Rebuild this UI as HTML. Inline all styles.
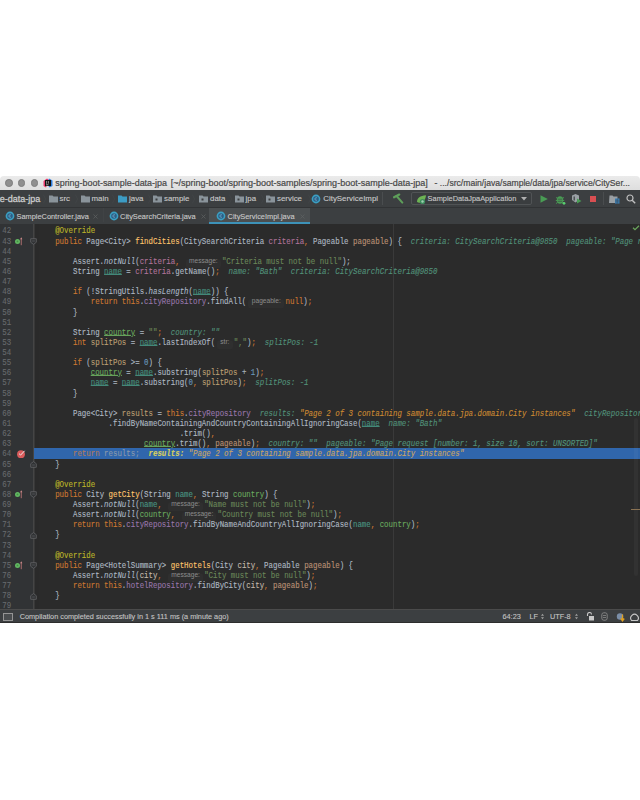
<!DOCTYPE html>
<html><head><meta charset="utf-8">
<style>
html,body{margin:0;padding:0;background:#fff;width:640px;height:800px;overflow:hidden;position:relative}
*{box-sizing:border-box}
.abs{position:absolute}
#title{position:absolute;left:0;top:176px;width:640px;height:14px;background:linear-gradient(#ebebeb,#dedede);border-radius:4px 4px 0 0}
#title .dot{position:absolute;top:3px;width:7.6px;height:7.6px;border-radius:50%;background:#8f8f8f;border:0.5px solid #7d7d7d}
#title .t{position:absolute;left:55.2px;top:1.6px;height:14px;line-height:14px;font:8.94px "Liberation Sans",sans-serif;color:#484848;white-space:pre;-webkit-text-stroke:0.2px #484848}
#nav{position:absolute;left:0;top:190px;width:640px;height:17px;background:#3c3f41;font:7.9px "Liberation Sans",sans-serif;color:#c8c8c8;-webkit-text-stroke:0.12px #c8c8c8}
#nav .ni{position:absolute;top:0.2px;height:17px;line-height:17px;white-space:pre}
#sep1{position:absolute;left:0;top:207px;width:640px;height:1px;background:#313335}
#tabs{position:absolute;left:0;top:208px;width:640px;height:16px;background:#3c3f41;font:7.6px "Liberation Sans",sans-serif;color:#c8c8c8;-webkit-text-stroke:0.12px #c8c8c8}
#tabs .tt{position:absolute;top:0.8px;height:16px;line-height:15px;white-space:pre}
#editor{position:absolute;left:0;top:224px;width:640px;height:385px;background:#2b2b2b;overflow:hidden}
#gut{position:absolute;left:0;top:224px;width:33.5px;height:385px;background:#313335}
#foldline{position:absolute;left:33px;top:224px;width:1px;height:385px;background:#454545;box-shadow:1px 0 0 #383838}
#margin{position:absolute;left:393px;top:224px;width:1px;height:385px;background:#3a3a3a}
.ln{position:absolute;left:37.4px;height:10.135px;line-height:10.135px;font:7.42px "Liberation Mono",monospace;white-space:pre;color:#a9b7c6;-webkit-text-stroke:0.1px currentColor;transform:scaleY(1.1);transform-origin:0 7.6px}
.num{position:absolute;left:0;width:11.2px;text-align:right;height:10.135px;line-height:10.135px;font:7.42px "Liberation Mono",monospace;color:#676a6d;-webkit-text-stroke:0.1px currentColor;transform:scaleY(1.1);transform-origin:0 7.6px}
.kw{color:#cc7832}.df{color:#afb9c3}.an{color:#bbb529}.st{color:#6a8759}.nu{color:#6897bb}.md{color:#ffc66d}.fl{color:#9876aa}.it{font-style:italic}
.pc{color:#b0739a}.pp{color:#bb9175}.vn{color:#458e7e;text-decoration:underline;text-underline-offset:0px}.vc{color:#6aaa5f;text-decoration:underline;text-underline-offset:0px}.vs{color:#bb9f72}.py{color:#c2b8aa}.vn2{color:#4a9683}.vc2{color:#6aaa5f}
.dv{color:#52927a;font-style:italic}.dc{color:#cc8a32;font-style:italic}
.hk{color:#b07a5a}.hd{color:#8a9aab}.hy{color:#d8d060;font-style:italic;font-weight:bold}.hv{color:#c9a565;font-style:italic}
.hint{display:inline-block;position:relative;height:10px;vertical-align:top}
.hint b{position:absolute;left:2px;right:1.2px;top:1.6px;bottom:0.2px;background:#2f2f2f;border-radius:2px;font:normal 6.6px "Liberation Sans",sans-serif;color:#8c8c8c;text-align:center;line-height:2.9px;-webkit-text-stroke:0}
#hl{position:absolute;left:34px;top:448.4px;width:606px;height:10.135px;background:#3066ac}
#status{position:absolute;left:0;top:609px;width:640px;height:14px;background:#3c3f41;border-top:1px solid #4b4b4b;border-bottom:1px solid #2d2d2d;font:7.3px "Liberation Sans",sans-serif;color:#c4c4c4;-webkit-text-stroke:0.1px #c4c4c4}
#status .s{position:absolute;top:0.7px;height:12px;line-height:12px;white-space:pre}
</style></head><body>
<div id="title">
  <div class="dot" style="left:5px"></div><div class="dot" style="left:17.75px"></div><div class="dot" style="left:30.5px"></div>
  <svg class="abs" style="left:42.5px;top:2px" width="10" height="10" viewBox="0 0 10 10"><path d="M0.5 3L4 0.5L6 2L3 9.5L0.5 8z" fill="#e8396b"/><path d="M6 0.5L9.5 2.5V8L6.5 9.5L4 6z" fill="#2f7fe0"/><rect x="2" y="2" width="6" height="6" fill="#111"/><path d="M3 6.8h2.5" stroke="#fff" stroke-width="0.6"/><path d="M3.6 3v2.8M5.4 3v2.6" stroke="#fff" stroke-width="0.5"/></svg>
  <div class="t" style="left:55.2px;font-size:8.95px">spring-boot-sample-data-jpa</div><div class="t" style="left:170.8px;font-size:9.01px">[~/spring-boot/spring-boot-samples/spring-boot-sample-data-jpa]</div><div class="t" style="left:434.6px;font-size:8.6px">- .../src/main/java/sample/data/jpa/service/CitySer...</div>
</div>
<div id="nav">
<div class="ni" style="right:599.8px;top:1px;text-align:right;color:#cbcbcb;font-size:9px;-webkit-text-stroke:0.3px #cbcbcb">e-data-jpa</div>
<svg class="abs" style="left:42.85px;top:4px" width="3" height="10" viewBox="0 0 3 10"><path d="M0.3 0.5L2.6 5L0.3 9.5" stroke="#45484a" stroke-width="0.6" fill="none"/></svg>
<svg class="abs" style="left:48.7px;top:4.8px" width="9" height="8" viewBox="0 0 9 8"><path d="M0 0.5h3.5l1 1H9V7.5H0z" fill="#8a949b"/></svg>
<div class="ni" style="left:59.5px">src</div>
<svg class="abs" style="left:74.85px;top:4px" width="3" height="10" viewBox="0 0 3 10"><path d="M0.3 0.5L2.6 5L0.3 9.5" stroke="#45484a" stroke-width="0.6" fill="none"/></svg>
<svg class="abs" style="left:80.7px;top:4.8px" width="9" height="8" viewBox="0 0 9 8"><path d="M0 0.5h3.5l1 1H9V7.5H0z" fill="#8a949b"/></svg>
<div class="ni" style="left:91.5px">main</div>
<svg class="abs" style="left:111.5px;top:4px" width="3" height="10" viewBox="0 0 3 10"><path d="M0.3 0.5L2.6 5L0.3 9.5" stroke="#45484a" stroke-width="0.6" fill="none"/></svg>
<svg class="abs" style="left:118px;top:4.8px" width="9" height="8" viewBox="0 0 9 8"><path d="M0 0.5h3.5l1 1H9V7.5H0z" fill="#3c9cc4"/></svg>
<div class="ni" style="left:129.0px">java</div>
<svg class="abs" style="left:147.75px;top:4px" width="3" height="10" viewBox="0 0 3 10"><path d="M0.3 0.5L2.6 5L0.3 9.5" stroke="#45484a" stroke-width="0.6" fill="none"/></svg>
<svg class="abs" style="left:153px;top:4.8px" width="9" height="8" viewBox="0 0 9 8"><path d="M0 0.5h3.5l1 1H9V7.5H0z" fill="#8a949b"/><rect x="2.5" y="3.5" width="2" height="2" fill="#3c3f41"/></svg>
<div class="ni" style="left:164.0px">sample</div>
<svg class="abs" style="left:192.125px;top:4px" width="3" height="10" viewBox="0 0 3 10"><path d="M0.3 0.5L2.6 5L0.3 9.5" stroke="#45484a" stroke-width="0.6" fill="none"/></svg>
<svg class="abs" style="left:198.75px;top:4.8px" width="9" height="8" viewBox="0 0 9 8"><path d="M0 0.5h3.5l1 1H9V7.5H0z" fill="#8a949b"/><rect x="2.5" y="3.5" width="2" height="2" fill="#3c3f41"/></svg>
<div class="ni" style="left:210.0px">data</div>
<svg class="abs" style="left:229.25px;top:4px" width="3" height="10" viewBox="0 0 3 10"><path d="M0.3 0.5L2.6 5L0.3 9.5" stroke="#45484a" stroke-width="0.6" fill="none"/></svg>
<svg class="abs" style="left:235px;top:4.8px" width="9" height="8" viewBox="0 0 9 8"><path d="M0 0.5h3.5l1 1H9V7.5H0z" fill="#8a949b"/><rect x="2.5" y="3.5" width="2" height="2" fill="#3c3f41"/></svg>
<div class="ni" style="left:245.5px">jpa</div>
<svg class="abs" style="left:260.5px;top:4px" width="3" height="10" viewBox="0 0 3 10"><path d="M0.3 0.5L2.6 5L0.3 9.5" stroke="#45484a" stroke-width="0.6" fill="none"/></svg>
<svg class="abs" style="left:266px;top:4.8px" width="9" height="8" viewBox="0 0 9 8"><path d="M0 0.5h3.5l1 1H9V7.5H0z" fill="#8a949b"/><rect x="2.5" y="3.5" width="2" height="2" fill="#3c3f41"/></svg>
<div class="ni" style="left:277.0px">service</div>
<svg class="abs" style="left:308px;top:4px" width="3" height="10" viewBox="0 0 3 10"><path d="M0.3 0.5L2.6 5L0.3 9.5" stroke="#45484a" stroke-width="0.6" fill="none"/></svg>
<svg class="abs" style="left:311.25px;top:3.5px" width="10" height="10" viewBox="0 0 10 10"><circle cx="5" cy="5" r="4.4" fill="#3b9fc2"/><circle cx="5" cy="5" r="2.8" fill="#2b5f86"/><path d="M6 4A1.3 1.3 0 1 0 6 6" stroke="#7fb8d8" stroke-width="0.7" fill="none"/></svg>
<div class="ni" style="left:323.25px">CityServiceImpl</div>
<div class="abs" style="left:382px;top:2px;width:1px;height:13px;background:#4a4d4f"></div>
<svg class="abs" style="left:392px;top:3px" width="13" height="11" viewBox="0 0 13 11"><path d="M2 4.3L7.3 1.5" stroke="#5e9f5a" stroke-width="2.1" stroke-linecap="round"/><path d="M4.6 3L10.3 9.6" stroke="#5e9f5a" stroke-width="2" stroke-linecap="round"/></svg>
<div class="abs" style="left:410.5px;top:2.4px;width:121px;height:12.6px;border:1px solid #505355;border-radius:2px;background:#3a3d3f"></div>
<svg class="abs" style="left:415.5px;top:3.5px" width="11" height="11" viewBox="0 0 11 11"><path d="M1 8C1 4 4 1.5 10 1.2C9.5 6 7 8.8 3 8.8z" fill="#6db354"/><circle cx="6.5" cy="7.5" r="2.6" fill="#3d8d5e"/><circle cx="6.5" cy="7.5" r="1.2" fill="#9fd0b0"/></svg>
<div class="ni" style="left:427.6px;font-size:7.4px">SampleDataJpaApplication</div>
<svg class="abs" style="left:521px;top:7px" width="6" height="4" viewBox="0 0 6 4"><path d="M0 0H6L3 3.5z" fill="#b0b0b0"/></svg>
<svg class="abs" style="left:539.5px;top:5px" width="8" height="8" viewBox="0 0 8 8"><path d="M0.5 0.3L7.8 4L0.5 7.7z" fill="#499c54"/></svg>
<svg class="abs" style="left:555px;top:3.5px" width="11" height="11" viewBox="0 0 11 11"><ellipse cx="5" cy="6" rx="3.2" ry="3.8" fill="#499c54"/><path d="M1 3.5L3 4.5M9 3.5L7 4.5M0.8 6.5H2M9.2 6.5H8M1 9.5L2.6 8.5M9 9.5L7.4 8.5" stroke="#499c54" stroke-width="0.9"/><path d="M2.8 5.2H7.2M2.8 7.3H7.2" stroke="#3c3f41" stroke-width="0.6"/><circle cx="9" cy="9.3" r="1.4" fill="#59d070"/></svg>
<svg class="abs" style="left:571px;top:3px" width="11" height="11" viewBox="0 0 11 11"><path d="M1 2.5L4.5 1L8 2.5V7L4.5 9.5L1 7z" fill="#9aa0a5"/><path d="M3.2 3.5V7.5" stroke="#3c3f41" stroke-width="1.2"/><path d="M6 5.5L10.5 8L6 10.5z" fill="#499c54"/></svg>
<div class="abs" style="left:589.8px;top:6px;width:6.7px;height:6.3px;background:#d94f52"></div>
<div class="abs" style="left:602.5px;top:2px;width:1px;height:13px;background:#4a4d4f"></div>
<svg class="abs" style="left:608.5px;top:3.5px" width="11" height="10" viewBox="0 0 11 10"><path d="M0.5 1.5h3l1 1h4V9h-8.5z" fill="#9aa0a5"/><rect x="6" y="4.5" width="4.5" height="5" fill="#3b86c1"/><path d="M6 6.2h4.5M6 7.9h4.5M8.2 4.5v5" stroke="#3c3f41" stroke-width="0.5"/></svg>
<svg class="abs" style="left:625.5px;top:3.5px" width="10" height="10" viewBox="0 0 10 10"><circle cx="4" cy="4" r="3" stroke="#c0c0c0" stroke-width="1.2" fill="none"/><path d="M6.2 6.2L9.2 9.2" stroke="#c0c0c0" stroke-width="1.4"/></svg>
</div>
<div id="sep1"></div>
<div id="tabs">
<div class="abs" style="left:209.4px;top:0;width:100.3px;height:16px;background:#4b4f51"></div>
<div class="abs" style="left:209.4px;top:13.6px;width:100.3px;height:2px;background:#3d92b8"></div>
<div class="abs" style="left:103px;top:0;width:1px;height:14px;background:#404345"></div>
<svg class="abs" style="left:5.300000000000001px;top:3px" width="10" height="10" viewBox="0 0 10 10"><circle cx="5" cy="5" r="4.4" fill="#3b9fc2"/><circle cx="5" cy="5" r="2.8" fill="#2b5f86"/><path d="M6 4A1.3 1.3 0 1 0 6 6" stroke="#7fb8d8" stroke-width="0.7" fill="none"/></svg>
<div class="tt" style="left:16.5px;font-size:7.4px">SampleController.java</div>
<svg class="abs" style="left:93.0px;top:5.5px" width="5" height="5" viewBox="0 0 5 5"><path d="M0.5 0.5L4.5 4.5M4.5 0.5L0.5 4.5" stroke="#5e6163" stroke-width="0.7"/></svg>
<svg class="abs" style="left:108.6px;top:3px" width="10" height="10" viewBox="0 0 10 10"><circle cx="5" cy="5" r="4.4" fill="#3b9fc2"/><circle cx="5" cy="5" r="2.8" fill="#2b5f86"/><path d="M6 4A1.3 1.3 0 1 0 6 6" stroke="#7fb8d8" stroke-width="0.7" fill="none"/></svg>
<div class="tt" style="left:120.1px;font-size:7.4px">CitySearchCriteria.java</div>
<svg class="abs" style="left:201.1px;top:5.5px" width="5" height="5" viewBox="0 0 5 5"><path d="M0.5 0.5L4.5 4.5M4.5 0.5L0.5 4.5" stroke="#5e6163" stroke-width="0.7"/></svg>
<svg class="abs" style="left:215.6px;top:3px" width="10" height="10" viewBox="0 0 10 10"><circle cx="5" cy="5" r="4.4" fill="#3b9fc2"/><circle cx="5" cy="5" r="2.8" fill="#2b5f86"/><path d="M6 4A1.3 1.3 0 1 0 6 6" stroke="#7fb8d8" stroke-width="0.7" fill="none"/></svg>
<div class="tt" style="left:227.6px;font-size:7.4px">CityServiceImpl.java</div>
<svg class="abs" style="left:299.5px;top:5.5px" width="5" height="5" viewBox="0 0 5 5"><path d="M0.5 0.5L4.5 4.5M4.5 0.5L0.5 4.5" stroke="#5e6163" stroke-width="0.7"/></svg>
</div>
<div id="editor"></div>
<div id="gut"></div>
<div class="abs" style="left:35px;top:224px;width:4px;height:385px;background:#2a2a2a"></div>
<div id="foldline"></div>
<div id="margin"></div>
<div id="hl"></div>
<div class="abs" style="left:634px;top:417.5px;width:4px;height:158.5px;background:rgba(255,255,255,0.035);border-radius:2px"></div>
<div class="abs" style="left:631px;top:509px;width:9px;height:1px;background:#8a7253"></div>
<div class="num" style="top:227.43px">42</div>
<div class="num" style="top:237.56px">43</div>
<div class="num" style="top:247.70px">44</div>
<div class="num" style="top:257.84px">45</div>
<div class="num" style="top:267.97px">46</div>
<div class="num" style="top:278.11px">47</div>
<div class="num" style="top:288.24px">48</div>
<div class="num" style="top:298.38px">49</div>
<div class="num" style="top:308.51px">50</div>
<div class="num" style="top:318.64px">51</div>
<div class="num" style="top:328.78px">52</div>
<div class="num" style="top:338.92px">53</div>
<div class="num" style="top:349.05px">54</div>
<div class="num" style="top:359.19px">55</div>
<div class="num" style="top:369.32px">56</div>
<div class="num" style="top:379.46px">57</div>
<div class="num" style="top:389.59px">58</div>
<div class="num" style="top:399.73px">59</div>
<div class="num" style="top:409.86px">60</div>
<div class="num" style="top:420.00px">61</div>
<div class="num" style="top:430.13px">62</div>
<div class="num" style="top:440.26px">63</div>
<div class="num" style="top:450.40px">64</div>
<div class="num" style="top:460.53px">65</div>
<div class="num" style="top:470.67px">66</div>
<div class="num" style="top:480.81px">67</div>
<div class="num" style="top:490.94px">68</div>
<div class="num" style="top:501.07px">69</div>
<div class="num" style="top:511.21px">70</div>
<div class="num" style="top:521.35px">71</div>
<div class="num" style="top:531.48px">72</div>
<div class="num" style="top:541.62px">73</div>
<div class="num" style="top:551.75px">74</div>
<div class="num" style="top:561.88px">75</div>
<div class="num" style="top:572.02px">76</div>
<div class="num" style="top:582.15px">77</div>
<div class="num" style="top:592.29px">78</div>
<div class="num" style="top:602.42px">79</div>
<svg class="abs" style="left:13px;top:235.73px" width="12" height="10" viewBox="0 0 12 10"><circle cx="4.5" cy="5.4" r="2.5" fill="#62b862"/><circle cx="4.5" cy="5.4" r="0.9" fill="#458f45"/><path d="M8.25 9.2V2.5" stroke="#c97c7c" stroke-width="0.8"/><path d="M7.2 3.3L8.25 1.3L9.3 3.3z" fill="#d49090"/></svg>
<svg class="abs" style="left:13px;top:489.11px" width="12" height="10" viewBox="0 0 12 10"><circle cx="4.5" cy="5.4" r="2.5" fill="#62b862"/><circle cx="4.5" cy="5.4" r="0.9" fill="#458f45"/><path d="M8.25 9.2V2.5" stroke="#c97c7c" stroke-width="0.8"/><path d="M7.2 3.3L8.25 1.3L9.3 3.3z" fill="#d49090"/></svg>
<svg class="abs" style="left:13px;top:560.05px" width="12" height="10" viewBox="0 0 12 10"><circle cx="4.5" cy="5.4" r="2.5" fill="#62b862"/><circle cx="4.5" cy="5.4" r="0.9" fill="#458f45"/><path d="M8.25 9.2V2.5" stroke="#c97c7c" stroke-width="0.8"/><path d="M7.2 3.3L8.25 1.3L9.3 3.3z" fill="#d49090"/></svg>
<svg class="abs" style="left:30.2px;top:237.83px" width="7" height="7" viewBox="0 0 7 7"><path d="M0.7 0.7H6.3V4.3L3.5 6.4L0.7 4.3z" fill="#313335" stroke="#6a6c6e" stroke-width="0.7"/><path d="M2.2 3H4.8" stroke="#6a6c6e" stroke-width="0.6"/></svg>
<svg class="abs" style="left:30.2px;top:491.21px" width="7" height="7" viewBox="0 0 7 7"><path d="M0.7 0.7H6.3V4.3L3.5 6.4L0.7 4.3z" fill="#313335" stroke="#6a6c6e" stroke-width="0.7"/><path d="M2.2 3H4.8" stroke="#6a6c6e" stroke-width="0.6"/></svg>
<svg class="abs" style="left:30.2px;top:562.15px" width="7" height="7" viewBox="0 0 7 7"><path d="M0.7 0.7H6.3V4.3L3.5 6.4L0.7 4.3z" fill="#313335" stroke="#6a6c6e" stroke-width="0.7"/><path d="M2.2 3H4.8" stroke="#6a6c6e" stroke-width="0.6"/></svg>
<svg class="abs" style="left:30.2px;top:460.81px" width="7" height="7" viewBox="0 0 7 7"><path d="M0.7 6.3H6.3V2.7L3.5 0.6L0.7 2.7z" fill="#313335" stroke="#6a6c6e" stroke-width="0.7"/><path d="M2.2 4H4.8" stroke="#6a6c6e" stroke-width="0.6"/></svg>
<svg class="abs" style="left:30.2px;top:531.75px" width="7" height="7" viewBox="0 0 7 7"><path d="M0.7 6.3H6.3V2.7L3.5 0.6L0.7 2.7z" fill="#313335" stroke="#6a6c6e" stroke-width="0.7"/><path d="M2.2 4H4.8" stroke="#6a6c6e" stroke-width="0.6"/></svg>
<svg class="abs" style="left:30.2px;top:592.56px" width="7" height="7" viewBox="0 0 7 7"><path d="M0.7 6.3H6.3V2.7L3.5 0.6L0.7 2.7z" fill="#313335" stroke="#6a6c6e" stroke-width="0.7"/><path d="M2.2 4H4.8" stroke="#6a6c6e" stroke-width="0.6"/></svg>
<svg class="abs" style="left:15.8px;top:448.57px" width="10" height="10" viewBox="0 0 10 10"><circle cx="5" cy="5.2" r="3.9" fill="#db5c5c"/><path d="M3 4.6L4.6 6.1L8.6 1.8" stroke="#e8e8e8" stroke-width="1" fill="none"/></svg>
<svg class="abs" style="left:631.5px;top:225px" width="8" height="6" viewBox="0 0 8 6"><path d="M1 2.7L3 4.6L7 0.7" stroke="#6aa65c" stroke-width="1.2" fill="none"/></svg>
<div class="ln" style="top:227.43px"><span class="sp">    </span><span class="an">@Override</span></div>
<div class="ln" style="top:237.56px"><span class="sp">    </span><span class="kw">public </span><span class="df">Page&lt;City&gt; </span><span class="md">findCities</span><span class="df">(CitySearchCriteria </span><span class="pc">criteria</span><span class="kw">, </span><span class="df">Pageable </span><span class="pp">pageable</span><span class="df">) {</span><span class="sp">  </span><span class="dv">criteria: CitySearchCriteria@9850  pageable: "Page request [number: 1, size 10, sort: UNSORTED]"</span></div>
<div class="ln" style="top:247.70px"></div>
<div class="ln" style="top:257.84px"><span class="sp">        </span><span class="df">Assert.</span><span class="it">notNull</span><span class="df">(</span><span class="pc">criteria</span><span class="kw">, </span><span class="hint" style="width:37.800px"><b>message:</b></span><span class="st">"Criteria must not be null"</span><span class="df">);</span></div>
<div class="ln" style="top:267.97px"><span class="sp">        </span><span class="df">String </span><span class="vn">name</span><span class="df"> = </span><span class="pc">criteria</span><span class="df">.getName()</span><span class="kw">;</span><span class="sp">  </span><span class="dv">name: "Bath"  criteria: CitySearchCriteria@9850</span></div>
<div class="ln" style="top:278.11px"></div>
<div class="ln" style="top:288.24px"><span class="sp">        </span><span class="kw">if </span><span class="df">(!StringUtils.</span><span class="it">hasLength</span><span class="df">(</span><span class="vn">name</span><span class="df">)) {</span></div>
<div class="ln" style="top:298.38px"><span class="sp">            </span><span class="kw">return this</span><span class="df">.</span><span class="fl">cityRepository</span><span class="df">.findAll(</span><span class="hint" style="width:39.200px"><b>pageable:</b></span><span class="kw">null</span><span class="df">)</span><span class="kw">;</span></div>
<div class="ln" style="top:308.51px"><span class="sp">        </span><span class="df">}</span></div>
<div class="ln" style="top:318.64px"></div>
<div class="ln" style="top:328.78px"><span class="sp">        </span><span class="df">String </span><span class="vc">country</span><span class="df"> = </span><span class="st">""</span><span class="kw">;</span><span class="sp">  </span><span class="dv">country: ""</span></div>
<div class="ln" style="top:338.92px"><span class="sp">        </span><span class="kw">int </span><span class="vs">splitPos</span><span class="df"> = </span><span class="vn">name</span><span class="df">.lastIndexOf(</span><span class="hint" style="width:18.500px"><b>str:</b></span><span class="st">","</span><span class="df">)</span><span class="kw">;</span><span class="sp">  </span><span class="dv">splitPos: -1</span></div>
<div class="ln" style="top:349.05px"></div>
<div class="ln" style="top:359.19px"><span class="sp">        </span><span class="kw">if </span><span class="df">(</span><span class="vs">splitPos</span><span class="df"> &gt;= </span><span class="nu">0</span><span class="df">) {</span></div>
<div class="ln" style="top:369.32px"><span class="sp">            </span><span class="vc">country</span><span class="df"> = </span><span class="vn">name</span><span class="df">.substring(</span><span class="vs">splitPos</span><span class="df"> + </span><span class="nu">1</span><span class="df">)</span><span class="kw">;</span></div>
<div class="ln" style="top:379.46px"><span class="sp">            </span><span class="vn">name</span><span class="df"> = </span><span class="vn">name</span><span class="df">.substring(</span><span class="nu">0</span><span class="kw">, </span><span class="vs">splitPos</span><span class="df">)</span><span class="kw">;</span><span class="sp">  </span><span class="dv">splitPos: -1</span></div>
<div class="ln" style="top:389.59px"><span class="sp">        </span><span class="df">}</span></div>
<div class="ln" style="top:399.73px"></div>
<div class="ln" style="top:409.86px"><span class="sp">        </span><span class="df">Page&lt;City&gt; </span><span class="vs">results</span><span class="df"> = </span><span class="kw">this</span><span class="df">.</span><span class="fl">cityRepository</span><span class="sp">  </span><span class="dv">results: </span><span class="dc">"Page 2 of 3 containing sample.data.jpa.domain.City instances"</span><span class="sp">  </span><span class="dv">cityRepository: </span></div>
<div class="ln" style="top:420.00px"><span class="sp">                </span><span class="df">.findByNameContainingAndCountryContainingAllIgnoringCase(</span><span class="vn">name</span><span class="sp">  </span><span class="dv">name: "Bath"</span></div>
<div class="ln" style="top:430.13px"><span class="sp">                                </span><span class="df">.trim()</span><span class="kw">,</span></div>
<div class="ln" style="top:440.26px"><span class="sp">                        </span><span class="vc">country</span><span class="df">.trim()</span><span class="kw">, </span><span class="pp">pageable</span><span class="df">)</span><span class="kw">;</span><span class="sp">  </span><span class="dv">country: ""  pageable: "Page request [number: 1, size 10, sort: UNSORTED]"</span></div>
<div class="ln" style="top:450.40px"><span class="sp">        </span><span class="hk">return </span><span class="hd">results;</span><span class="sp">  </span><span class="hy">results: </span><span class="hv">"Page 2 of 3 containing sample.data.jpa.domain.City instances"</span></div>
<div class="ln" style="top:460.53px"><span class="sp">    </span><span class="df">}</span></div>
<div class="ln" style="top:470.67px"></div>
<div class="ln" style="top:480.81px"><span class="sp">    </span><span class="an">@Override</span></div>
<div class="ln" style="top:490.94px"><span class="sp">    </span><span class="kw">public </span><span class="df">City </span><span class="md">getCity</span><span class="df">(String </span><span class="vn2">name</span><span class="kw">, </span><span class="df">String </span><span class="vc2">country</span><span class="df">) {</span></div>
<div class="ln" style="top:501.07px"><span class="sp">        </span><span class="df">Assert.</span><span class="it">notNull</span><span class="df">(</span><span class="vn2">name</span><span class="kw">, </span><span class="hint" style="width:37.800px"><b>message:</b></span><span class="st">"Name must not be null"</span><span class="df">)</span><span class="kw">;</span></div>
<div class="ln" style="top:511.21px"><span class="sp">        </span><span class="df">Assert.</span><span class="it">notNull</span><span class="df">(</span><span class="vc2">country</span><span class="kw">, </span><span class="hint" style="width:37.800px"><b>message:</b></span><span class="st">"Country must not be null"</span><span class="df">)</span><span class="kw">;</span></div>
<div class="ln" style="top:521.35px"><span class="sp">        </span><span class="kw">return this</span><span class="df">.</span><span class="fl">cityRepository</span><span class="df">.findByNameAndCountryAllIgnoringCase(</span><span class="vn2">name</span><span class="kw">, </span><span class="vc2">country</span><span class="df">)</span><span class="kw">;</span></div>
<div class="ln" style="top:531.48px"><span class="sp">    </span><span class="df">}</span></div>
<div class="ln" style="top:541.62px"></div>
<div class="ln" style="top:551.75px"><span class="sp">    </span><span class="an">@Override</span></div>
<div class="ln" style="top:561.88px"><span class="sp">    </span><span class="kw">public </span><span class="df">Page&lt;HotelSummary&gt; </span><span class="md">getHotels</span><span class="df">(City </span><span class="py">city</span><span class="kw">, </span><span class="df">Pageable </span><span class="pp">pageable</span><span class="df">) {</span></div>
<div class="ln" style="top:572.02px"><span class="sp">        </span><span class="df">Assert.</span><span class="it">notNull</span><span class="df">(</span><span class="py">city</span><span class="kw">, </span><span class="hint" style="width:37.800px"><b>message:</b></span><span class="st">"City must not be null"</span><span class="df">)</span><span class="kw">;</span></div>
<div class="ln" style="top:582.15px"><span class="sp">        </span><span class="kw">return this</span><span class="df">.</span><span class="fl">hotelRepository</span><span class="df">.findByCity(</span><span class="py">city</span><span class="kw">, </span><span class="pp">pageable</span><span class="df">)</span><span class="kw">;</span></div>
<div class="ln" style="top:592.29px"><span class="sp">    </span><span class="df">}</span></div>
<div class="ln" style="top:602.42px"></div>
<div id="status">
  <div class="s" style="left:19.7px">Compilation completed successfully in 1 s 111 ms (a minute ago)</div>
<div class="abs" style="left:3px;top:3px;width:9.5px;height:7.5px;border:1.5px solid #959595;background:#4a4d4f"></div>
<div class="s" style="left:502.5px">64:23</div>
<div class="s" style="left:529.5px">LF</div>
<svg class="abs" style="left:540.5px;top:3px" width="3" height="7" viewBox="0 0 3 7"><path d="M0 2.8L1.5 0.8L3 2.8zM0 4.2L1.5 6.2L3 4.2z" fill="#a0a0a0"/></svg>
<div class="s" style="left:550px">UTF-8</div>
<svg class="abs" style="left:574.5px;top:3px" width="3" height="7" viewBox="0 0 3 7"><path d="M0 2.8L1.5 0.8L3 2.8zM0 4.2L1.5 6.2L3 4.2z" fill="#a0a0a0"/></svg>
<svg class="abs" style="left:585.5px;top:2px" width="8" height="9" viewBox="0 0 8 9"><path d="M1.5 4V2.5A2 2 0 0 1 5.5 2.5" stroke="#c8c8c8" stroke-width="1.1" fill="none"/><rect x="3" y="4" width="5" height="4.5" fill="#c8c8c8"/></svg>
<svg class="abs" style="left:600.5px;top:2px" width="7" height="9" viewBox="0 0 7 9"><rect x="0.8" y="0.8" width="5.4" height="7.4" rx="2" stroke="#8a8a8a" stroke-width="0.9" fill="none"/><path d="M2 3.5h3M2 5.5h3" stroke="#8a8a8a" stroke-width="0.8"/></svg>
<svg class="abs" style="left:615.5px;top:1.5px" width="10" height="10" viewBox="0 0 10 10"><circle cx="4" cy="4.5" r="3.2" fill="#7a8ea8"/><path d="M6.5 2.5V8M4.8 6.5L6.5 8.8L8.2 6.5" stroke="#e0a020" stroke-width="1.3" fill="none"/></svg>
<svg class="abs" style="left:628.5px;top:1.5px" width="10" height="10" viewBox="0 0 10 10"><path d="M2.5 8.5A3.8 3.8 0 1 1 8.5 8.5z" stroke="#c8c8c8" stroke-width="1.1" fill="none"/></svg>

</div>
</body></html>
